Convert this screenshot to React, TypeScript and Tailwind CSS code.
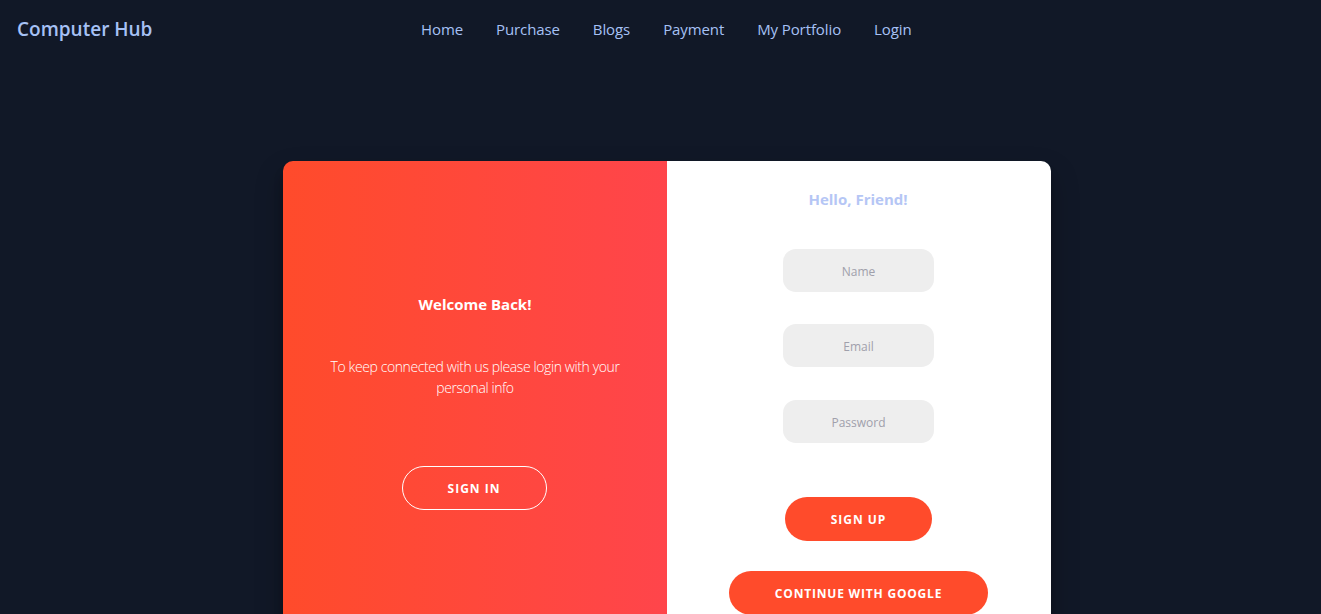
import React from "react";

const font = { fontFamily: '"Open Sans", "Noto Sans", "Liberation Sans", sans-serif' };

export default function App() {
  const links = ["Home", "Purchase", "Blogs", "Payment", "My Portfolio", "Login"];
  return (
    <div className="min-h-screen bg-[#111827]" style={font}>
      <nav className="flex h-[58px] items-center">
        <div className="w-[404.5px] pl-[17px] text-[19px] font-semibold text-[#a6c1f5]">Computer Hub</div>
        <ul className="flex">
          {links.map((l) => (
            <li key={l} className="px-[16.5px] text-[15px] tracking-[-0.1px] text-[#a6c1f5]">
              {l}
            </li>
          ))}
        </ul>
      </nav>
      <div className="pt-[103px] pl-[283px]">
        <div className="flex h-[520px] w-[768px] overflow-hidden rounded-[10px] shadow-[0_14px_28px_rgba(0,0,0,0.25),0_10px_10px_rgba(0,0,0,0.22)]">
          <div className="flex w-[384px] flex-col items-center bg-[linear-gradient(to_right,#FF4B2B,#FF454B)] px-[40px] pt-[133px] text-center text-white">
            <h2 className="text-[15px] font-bold leading-[20px]">Welcome Back!</h2>
            <p className="mt-[42px] text-[14px] font-light leading-[21px] tracking-[-0.4px]">
              To keep connected with us please login with your personal info
            </p>
            <button className="mt-[68px] ml-[-2px] h-[44px] w-[145px] rounded-full border border-white pt-[2px] text-[12px] font-bold tracking-[1px] text-white">
              SIGN IN
            </button>
          </div>
          <div className="flex w-[384px] flex-col items-center bg-white pt-[28px]">
            <h2 className="ml-[-2px] text-[15px] font-bold leading-[20px] text-[#b5c6f5]">Hello, Friend!</h2>
            <div className="mt-[40px] ml-[-1px] flex h-[43px] w-[151px] items-center justify-center rounded-[13px] bg-[#eeeeee] pt-[2px] text-[12px] text-[#a0a0ab]">Name</div>
            <div className="mt-[32px] ml-[-1px] flex h-[43px] w-[151px] items-center justify-center rounded-[13px] bg-[#eeeeee] pt-[2px] text-[12px] text-[#a0a0ab]">Email</div>
            <div className="mt-[33px] ml-[-1px] flex h-[43px] w-[151px] items-center justify-center rounded-[13px] bg-[#eeeeee] pt-[2px] text-[12px] text-[#a0a0ab]">Password</div>
            <button className="mt-[54px] ml-[-1px] h-[44px] w-[147px] rounded-full bg-[#FF4B2B] pt-[2px] text-[12px] font-bold tracking-[1px] text-white">SIGN UP</button>
            <button className="mt-[30px] ml-[-1px] h-[44px] w-[259px] rounded-full bg-[#FF4B2B] pt-[2px] text-[12px] font-bold tracking-[0.8px] text-white">CONTINUE WITH GOOGLE</button>
          </div>
        </div>
      </div>
    </div>
  );
}
